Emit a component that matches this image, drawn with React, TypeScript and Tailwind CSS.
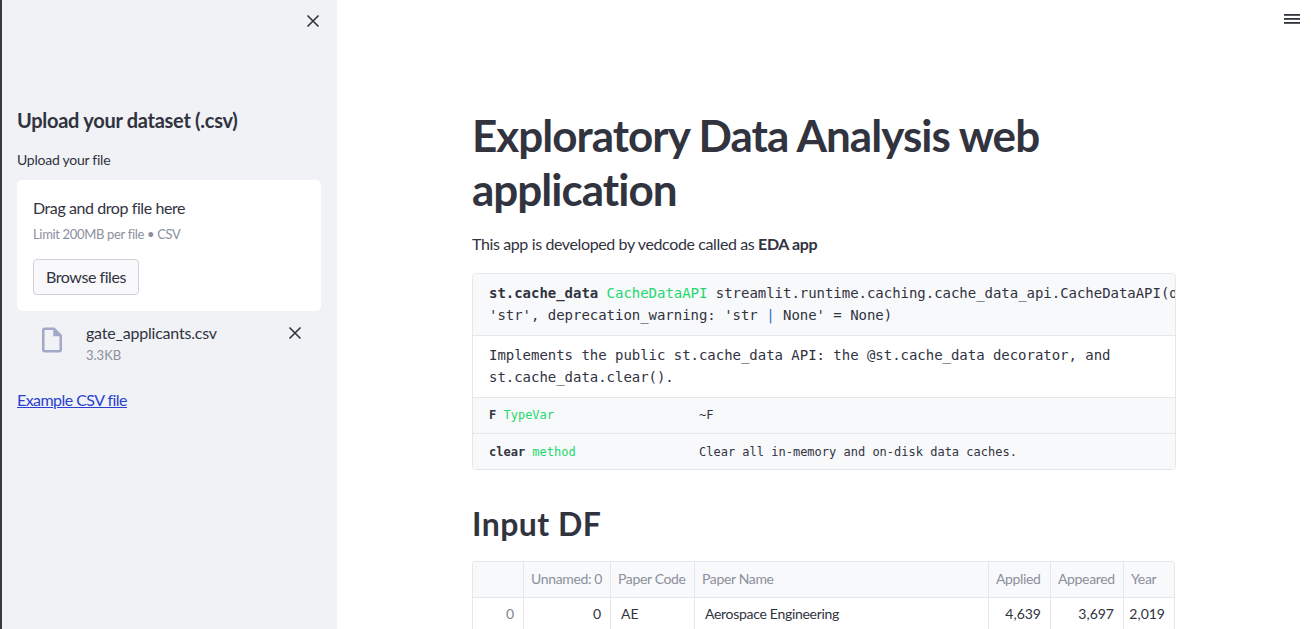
import React from "react";

const sans = "font-['Lato','Noto_Sans',sans-serif]";
const mono = "font-['DejaVu_Sans_Mono','Liberation_Mono',monospace]";

const Close = ({ className }: { className: string }) => (
  <svg viewBox="0 0 14 14" className={className} fill="none" stroke="#31333f" strokeWidth="1.6">
    <path d="M1.5 1.5 12.5 12.5M12.5 1.5 1.5 12.5" />
  </svg>
);

const rows = [
  { cls: "text-right text-[#808495]", v: "0" },
  { cls: "text-right", v: "0" },
  { cls: "text-left pl-[10px]", v: "AE" },
  { cls: "text-left pl-[10px] tracking-[-0.3px]", v: "Aerospace Engineering" },
  { cls: "text-right", v: "4,639" },
  { cls: "text-right", v: "3,697" },
  { cls: "text-right", v: "2,019" },
];
const heads = ["", "Unnamed: 0", "Paper Code", "Paper Name", "Applied", "Appeared", "Year"];
const widths = ["w-[51px]", "w-[87px]", "w-[84px]", "w-[294px]", "w-[62px]", "w-[73px]", "w-[51px]"];

export default function App() {
  return (
    <div className={`${sans} relative flex h-screen w-full overflow-hidden bg-white text-[#31333f]`}>
      <aside className="flex h-full w-[337px] shrink-0 flex-col border-l-2 border-[#3a3a3a] bg-[#f0f2f6] pl-[15px] pr-[16px] pt-[106px]">
        <Close className="absolute left-[306px] top-[14px] h-[14px] w-[14px]" />
        <h2 className="text-[20px] font-bold leading-[28px] tracking-[-0.28px]">Upload your dataset (.csv)</h2>
        <p className="mt-[16px] text-[14px] leading-[20px] tracking-[-0.25px]">Upload your file</p>
        <div className="mt-[10px] flex h-[131px] flex-col items-start rounded-[5px] bg-white px-[16px] pt-[16px]">
          <p className="text-[16px] leading-[24px] tracking-[-0.42px]">Drag and drop file here</p>
          <p className="mt-[5px] text-[13px] leading-[18px] tracking-[-0.33px] text-[#8c8f9c]">Limit 200MB per file • CSV</p>
          <button className="mt-[16px] h-[36px] w-[106px] rounded-[4px] border border-[#d2d3d8] bg-[#f9f9fb] pb-[1px] text-[16px] tracking-[-0.45px]">Browse files</button>
        </div>
        <div className="relative flex pl-[20px] pt-[10px]">
          <svg viewBox="0 0 24 24" className="mt-[4px] h-[30px] w-[30px]" fill="#a3a8c8">
            <path d="M14 2H6c-1.1 0-1.99.9-1.99 2L4 20c0 1.1.89 2 1.99 2H18c1.1 0 2-.9 2-2V8l-6-6zM6 20V4h7v5h5v11H6z" />
          </svg>
          <div className="ml-[19px]">
            <p className="text-[16px] leading-[24px] tracking-[-0.2px]">gate_applicants.csv</p>
            <p className="mt-[1px] text-[13px] leading-[18px] text-[#8c8f9c]">3.3KB</p>
          </div>
          <Close className="absolute right-[19px] top-[15px] h-[14px] w-[14px]" />
        </div>
        <a href="#" className="mt-[24px] text-[16px] leading-[24px] tracking-[-0.55px] text-[#2a3fd0] underline">Example CSV file</a>
      </aside>

      <svg viewBox="0 0 16 12" className="absolute left-[1284px] top-[14px] h-[12px] w-[16px]" fill="#31333f">
        <rect x="0" y="0" width="16" height="1.8" />
        <rect x="0" y="4" width="16" height="1.8" />
        <rect x="0" y="8" width="16" height="1.8" />
      </svg>

      <main className="min-w-0 flex-1 pl-[135px] pt-[108px]">
        <div className="w-[704px]">
          <h1 className="text-[44px] font-bold leading-[54px] tracking-[-0.98px]">Exploratory Data Analysis web application</h1>
          <p className="mt-[15px] text-[16px] leading-[26px] tracking-[-0.38px]">
            This app is developed by vedcode called as <strong className="font-bold">EDA app</strong>
          </p>
          <section className={`${mono} mt-[16px] overflow-hidden rounded-[4px] border border-[#e6e7ea] text-[#31333f]`}>
            <div className="overflow-hidden whitespace-nowrap border-b border-[#e6e7ea] bg-[#f8f9fb] px-[16px] py-[8px] text-[14px] leading-[22.4px] tracking-[-0.03px]">
              <div>
                <b>st.cache_data</b> <span className="text-[#1fd86e]">CacheDataAPI</span> streamlit.runtime.caching.cache_data_api.CacheDataAPI(d
              </div>
              <div>
                'str', deprecation_warning: 'str <span className="text-[#2a6fd0]">|</span> None' = None)
              </div>
            </div>
            <div className="border-b border-[#e6e7ea] px-[16px] py-[8px] text-[14px] leading-[22.4px] tracking-[-0.03px]">
              <div>Implements the public st.cache_data API: the @st.cache_data decorator, and</div>
              <div>st.cache_data.clear().</div>
            </div>
            <div className="bg-[#f8f9fb] text-[12px] leading-[18px]">
              <div className="flex h-[36px] items-center border-b border-dotted border-[#d5d7dc] px-[16px]">
                <div className="w-[210px]">
                  <b>F</b> <span className="text-[#1fd86e]">TypeVar</span>
                </div>
                <div>~F</div>
              </div>
              <div className="flex h-[35px] items-center px-[16px] pt-[2px]">
                <div className="w-[210px]">
                  <b>clear</b> <span className="text-[#1fd86e]">method</span>
                </div>
                <div>Clear all in-memory and on-disk data caches.</div>
              </div>
            </div>
          </section>
          <h2 className="mt-[32px] text-[32px] font-bold leading-[44px] tracking-[0.45px]">Input DF</h2>
          <table className="mt-[15px] table-fixed border-separate border-spacing-0 overflow-hidden rounded-t-[4px] border-l border-t border-[#e6e7ea] text-[14px]">
            <thead>
              <tr className="h-[36px] bg-[#f8f9fb]">
                {heads.map((h, i) => (
                  <th key={i} className={`${widths[i]} border-b border-r border-[#e6e7ea] pb-[1px] pl-[7px] text-left font-normal tracking-[-0.35px] text-[#8c8f9c]`}>{h}</th>
                ))}
              </tr>
            </thead>
            <tbody>
              <tr className="h-[34px]">
                {rows.map((c, i) => (
                  <td key={i} className={`${widths[i]} ${c.cls} border-r border-[#e6e7ea] pb-[3px] pr-[9px]`}>{c.v}</td>
                ))}
              </tr>
            </tbody>
          </table>
        </div>
      </main>
    </div>
  );
}
